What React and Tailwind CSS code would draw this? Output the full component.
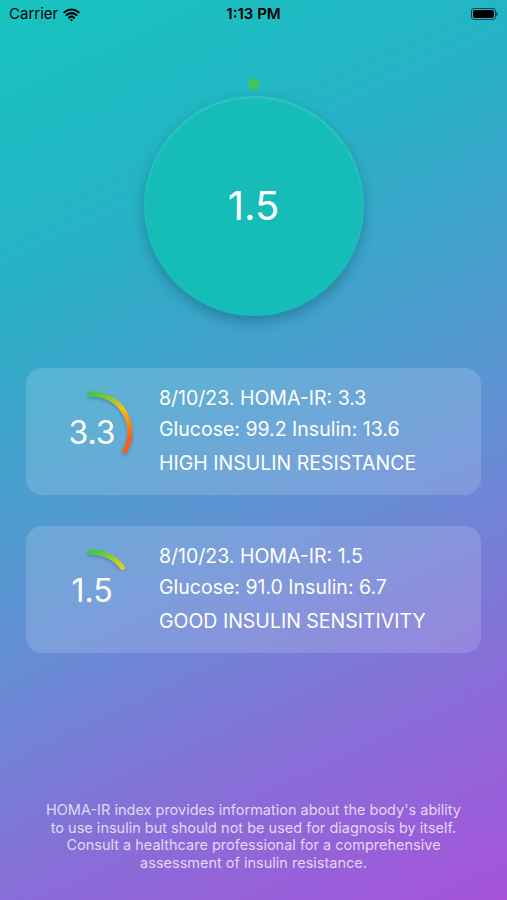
import { Wifi } from 'lucide-react';

const READINGS = [
  {
    value: '3.3',
    date: '8/10/23',
    glucose: '99.2',
    insulin: '13.6',
    label: 'HIGH INSULIN RESISTANCE',
    arc: 'M 46 10 A 38 38 0 0 1 80.9 67',
    stops: ['#3cc84a', '#f2c511', '#f5601e'],
  },
  {
    value: '1.5',
    date: '8/10/23',
    glucose: '91.0',
    insulin: '6.7',
    label: 'GOOD INSULIN SENSITIVITY',
    arc: 'M 46 10 A 38 38 0 0 1 78.7 25.7',
    stops: ['#3cc84a', '#8fcd2c', '#d8cf1c'],
  },
];

function Gauge({ r, id }) {
  return (
    <div className="relative w-[96px] h-[96px] shrink-0">
      <svg width="96" height="96" viewBox="0 0 96 96" className="absolute inset-0 overflow-visible">
        <defs>
          <linearGradient id={id} x1="0" y1="0" x2="0.4" y2="1">
            <stop offset="0" stopColor={r.stops[0]} />
            <stop offset="0.5" stopColor={r.stops[1]} />
            <stop offset="1" stopColor={r.stops[2]} />
          </linearGradient>
          <filter id={`${id}s`} x="-20%" y="-20%" width="140%" height="140%">
            <feDropShadow dx="0" dy="2" stdDeviation="1.5" floodColor="#1a3060" floodOpacity="0.3" />
          </filter>
        </defs>
        <path d={r.arc} fill="none" stroke={`url(#${id})`} strokeWidth="5" strokeLinecap="round" filter={`url(#${id}s)`} />
      </svg>
      <div className="absolute inset-0 flex items-center justify-center text-white text-[32px] leading-none pt-[2px]">
        {r.value}
      </div>
    </div>
  );
}

export default function App() {
  return (
    <div
      className="w-[507px] h-[900px] relative overflow-hidden flex flex-col bg-[linear-gradient(155deg,#16c4bf_0%,#27b2c6_25%,#5f93d4_55%,#8a6cd8_80%,#a653da_100%)]"
      style={{ fontFamily: 'Inter, "Liberation Sans", sans-serif' }}
    >
      {/* status bar */}
      <div className="h-[28px] flex items-center px-[9px] text-[15px] text-black relative">
        <div className="flex items-center gap-[5px]">
          <span>Carrier</span>
          <Wifi size={17} strokeWidth={3} />
        </div>
        <div className="absolute left-0 right-0 text-center font-semibold">1:13 PM</div>
        <div className="ml-auto flex items-center">
          <div className="w-[25px] h-[12px] rounded-[3px] border border-black/60 p-[1px]">
            <div className="w-full h-full bg-black rounded-[2px]" />
          </div>
          <div className="w-[2px] h-[4px] bg-black/50 rounded-r" />
        </div>
      </div>

      {/* big value */}
      <div className="flex flex-col items-center mt-[50px]">
        <div className="w-[12px] h-[12px] rounded-full bg-[#3dc65a]" />
        <div className="mt-[6px] w-[220px] h-[220px] rounded-full bg-[#16bdb8] shadow-[0_6px_14px_rgba(0,60,90,0.35),inset_0_2px_3px_rgba(255,255,255,0.15)] flex items-center justify-center">
          <span className="text-white text-[40px] leading-none">1.5</span>
        </div>
      </div>

      {/* readings */}
      <div className="mt-[52px] px-[26px] flex flex-col gap-[31px]">
        {READINGS.map((r, i) => (
          <div key={i} className="h-[127px] rounded-[16px] bg-white/15 flex items-center pl-[18px]">
            <Gauge r={r} id={`gauge${i}`} />
            <div className="ml-[19px] flex flex-col text-white text-[19.5px] leading-none">
              <span className="mt-[-1px]">{r.date}. HOMA-IR: {r.value}</span>
              <span className="mt-[12px]">Glucose: {r.glucose} Insulin: {r.insulin}</span>
              <span className="mt-[14px]">{r.label}</span>
            </div>
          </div>
        ))}
      </div>

      {/* disclaimer */}
      <div className="mt-auto mb-[29px] px-[38px] text-center text-white/75 text-[14.5px] leading-[17.5px]">
        HOMA-IR index provides information about the body's ability to use insulin but should not be used for diagnosis by itself. Consult a healthcare professional for a comprehensive assessment of insulin resistance.
      </div>
    </div>
  );
}
